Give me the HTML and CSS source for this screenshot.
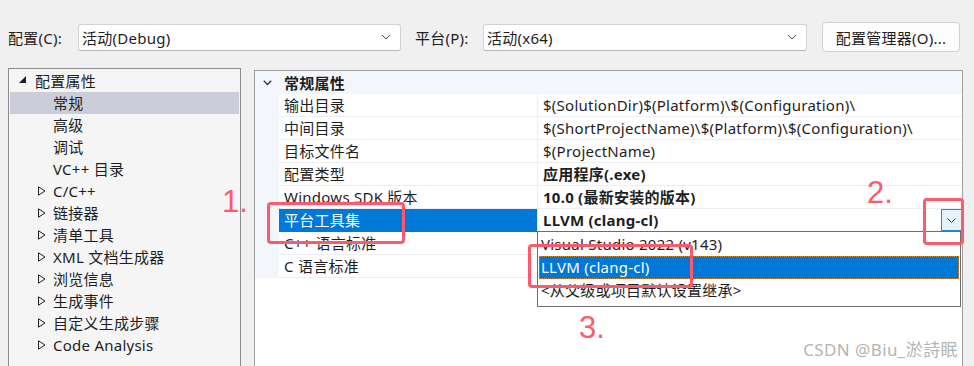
FILE: index.html
```html
<!DOCTYPE html>
<html lang="zh-CN">
<head>
    <meta charset="UTF-8">
    <title>属性页</title>
    <link rel="stylesheet" href="styles.css">
</head>
<body>
    <div class="toolbar">
        <span class="label">配置(C):</span>
        <div class="combo combo-config">
            <span>活动(Debug)</span>
            <svg class="chev" width="10" height="6" viewBox="0 0 10 6"><path d="M1 1l4 4 4-4" fill="none" stroke="#555" stroke-width="1"/></svg>
        </div>
        <span class="label label-platform">平台(P):</span>
        <div class="combo combo-platform">
            <span>活动(x64)</span>
            <svg class="chev" width="10" height="6" viewBox="0 0 10 6"><path d="M1 1l4 4 4-4" fill="none" stroke="#555" stroke-width="1"/></svg>
        </div>
        <button class="btn">配置管理器(O)...</button>
    </div>

    <div class="main">
        <div class="tree">
            <div class="node root">
                <svg class="tri" width="8" height="8" viewBox="0 0 8 8"><path d="M7 0v7H0z" fill="#1e1e1e"/></svg>
                配置属性
            </div>
            <div class="node leaf selected">常规</div>
            <div class="node leaf">高级</div>
            <div class="node leaf">调试</div>
            <div class="node leaf">VC++ 目录</div>
            <div class="node group"><svg class="tri-o" width="8" height="10" viewBox="0 0 8 10"><path d="M0.5 0.8v8.4L7 5z" fill="none" stroke="#1e1e1e"/></svg>C/C++</div>
            <div class="node group"><svg class="tri-o" width="8" height="10" viewBox="0 0 8 10"><path d="M0.5 0.8v8.4L7 5z" fill="none" stroke="#1e1e1e"/></svg>链接器</div>
            <div class="node group"><svg class="tri-o" width="8" height="10" viewBox="0 0 8 10"><path d="M0.5 0.8v8.4L7 5z" fill="none" stroke="#1e1e1e"/></svg>清单工具</div>
            <div class="node group"><svg class="tri-o" width="8" height="10" viewBox="0 0 8 10"><path d="M0.5 0.8v8.4L7 5z" fill="none" stroke="#1e1e1e"/></svg>XML 文档生成器</div>
            <div class="node group"><svg class="tri-o" width="8" height="10" viewBox="0 0 8 10"><path d="M0.5 0.8v8.4L7 5z" fill="none" stroke="#1e1e1e"/></svg>浏览信息</div>
            <div class="node group"><svg class="tri-o" width="8" height="10" viewBox="0 0 8 10"><path d="M0.5 0.8v8.4L7 5z" fill="none" stroke="#1e1e1e"/></svg>生成事件</div>
            <div class="node group"><svg class="tri-o" width="8" height="10" viewBox="0 0 8 10"><path d="M0.5 0.8v8.4L7 5z" fill="none" stroke="#1e1e1e"/></svg>自定义生成步骤</div>
            <div class="node group"><svg class="tri-o" width="8" height="10" viewBox="0 0 8 10"><path d="M0.5 0.8v8.4L7 5z" fill="none" stroke="#1e1e1e"/></svg>Code Analysis</div>
        </div>

        <div class="grid-panel">
            <div class="section">
                <svg class="sec-chev" width="9" height="6" viewBox="0 0 9 6"><path d="M0.8 0.8l3.7 3.7 3.7-3.7" fill="none" stroke="#333" stroke-width="1.3"/></svg>
                <span>常规属性</span>
            </div>
            <div class="rows">
                <div class="row"><div class="name">输出目录</div><div class="value">$(SolutionDir)$(Platform)\$(Configuration)\</div></div>
                <div class="row"><div class="name">中间目录</div><div class="value">$(ShortProjectName)\$(Platform)\$(Configuration)\</div></div>
                <div class="row"><div class="name">目标文件名</div><div class="value">$(ProjectName)</div></div>
                <div class="row"><div class="name">配置类型</div><div class="value bold">应用程序(.exe)</div></div>
                <div class="row"><div class="name">Windows SDK 版本</div><div class="value bold">10.0 (最新安装的版本)</div></div>
                <div class="row active">
                    <div class="name">平台工具集</div>
                    <div class="value bold">
                        <span>LLVM (clang-cl)</span>
                        <span class="drop-btn"><svg width="9" height="5" viewBox="0 0 9 5"><path d="M0.5 0.5l4 4 4-4" fill="none" stroke="#333" stroke-width="1"/></svg></span>
                    </div>
                    <div class="drop-list">
                        <div class="opt">Visual Studio 2022 (v143)</div>
                        <div class="opt chosen">LLVM (clang-cl)</div>
                        <div class="opt">&lt;从父级或项目默认设置继承&gt;</div>
                    </div>
                </div>
                <div class="row"><div class="name">C++ 语言标准</div><div class="value"></div></div>
                <div class="row"><div class="name">C 语言标准</div><div class="value"></div></div>
            </div>
        </div>
    </div>

    <!-- annotations drawn over the screenshot -->
    <div class="mark num num-1">1.</div>
    <div class="mark box box-1"></div>
    <div class="mark num num-2">2.</div>
    <div class="mark box box-2"></div>
    <div class="mark box box-3"></div>
    <div class="mark num num-3">3.</div>
    <div class="watermark">CSDN @Biu_淤詩眠</div>
</body>
</html>
```

FILE: styles.css
```css
body {
    margin: 0;
    height: 366px;
    overflow: hidden;
    background-color: #f0f0f0;
    font-family: "Noto Sans", "Noto Sans CJK SC", sans-serif;
    font-size: 15px;
    letter-spacing: 0.25px;
    color: #1e1e1e;
    position: relative;
}
.toolbar {
    display: flex;
    align-items: center;
    height: 30px;
    padding: 22px 0 0 8px;
}
.label {
    width: 70px;
}
.label-platform {
    width: 68px;
    margin-left: 14px;
}
.combo {
    box-sizing: border-box;
    height: 27px;
    background: #fff;
    border: 1px solid #d2d2d2;
    border-bottom-color: #b8b8b8;
    border-radius: 3px;
    display: flex;
    align-items: center;
    justify-content: space-between;
    padding: 0 9px 0 3px;
}
.combo-config { width: 323px; }
.combo-platform { width: 324px; }
.btn {
    box-sizing: border-box;
    margin-left: 15px;
    width: 138px;
    height: 30px;
    background: #fdfdfd;
    border: 1px solid #d0d0d0;
    border-radius: 4px;
    font: inherit;
    letter-spacing: inherit;
    color: #1e1e1e;
    padding: 0;
}
.main {
    display: flex;
    align-items: flex-start;
    margin-top: 16px;
    padding-left: 8px;
}
.tree {
    box-sizing: border-box;
    width: 233px;
    height: 298px;
    background: #f5f5f5;
    border: 1px solid #8c8c8c;
    border-bottom: none;
    padding: 1px 1px 0 1px;
}
.node {
    height: 22px;
    line-height: 22px;
    display: flex;
    align-items: center;
    white-space: nowrap;
}
.root { padding-left: 9px; }
.tri { margin-right: 8px; margin-top: -2px; }
.leaf { padding-left: 43px; }
.group { padding-left: 28px; }
.tri-o { margin-right: 7px; }
.selected { background: #cbcdda; }
.grid-panel {
    box-sizing: border-box;
    width: 709px;
    height: 296px;
    margin-left: 13px;
    margin-top: 2px;
    background: #fff;
    border: 1px solid #a0a0a0;
    border-bottom: none;
    position: relative;
}
.section {
    height: 23px;
    background: #f3f6fb;
    display: flex;
    align-items: center;
    font-weight: bold;
}
.sec-chev { margin: 0 12px 0 8px; }
.rows {
    border-left: 24px solid #f3f6fb;
}
.row {
    display: flex;
    height: 23px;
    position: relative;
}
.name {
    box-sizing: border-box;
    width: 259px;
    padding-left: 5px;
    line-height: 22px;
    border-right: 1px solid #eceef3;
    border-bottom: 1px solid #eceef3;
    white-space: nowrap;
}
.value {
    flex: 1;
    padding-left: 5px;
    line-height: 22px;
    border-bottom: 1px solid #eceef3;
    white-space: nowrap;
    display: flex;
    justify-content: space-between;
}
.bold { font-weight: bold; }
.active .name {
    background: #0078d7;
    color: #fff;
    border-bottom-color: #0078d7;
}
.drop-btn {
    box-sizing: border-box;
    width: 21px;
    height: 22px;
    background: #e5f1fb;
    border: 1px solid #2c84d6;
    display: flex;
    align-items: center;
    justify-content: center;
}
.drop-list {
    position: absolute;
    left: 258px;
    top: 22px;
    box-sizing: border-box;
    width: 424px;
    height: 76px;
    background: #fff;
    border: 1px solid #6e6e6e;
    padding: 1px 1px 0 1px;
    z-index: 2;
}
.opt {
    height: 23px;
    line-height: 22px;
    padding-left: 2px;
    white-space: nowrap;
}
.chosen {
    background: #0078d7;
    color: #fff;
    outline: 1px dotted #c98a3a;
    outline-offset: -1px;
}
.mark {
    position: absolute;
    z-index: 5;
}
.num {
    color: #fd5a6c;
    font-family: "Liberation Sans", sans-serif;
    font-size: 31px;
    line-height: 30px;
    letter-spacing: 0;
}
.num-1 { left: 222px; top: 187px; }
.num-2 { left: 867px; top: 178px; }
.num-3 { left: 579px; top: 313px; }
.box {
    box-sizing: border-box;
    border: 3px solid #fd5a6c;
    border-radius: 4px;
}
.box-1 { left: 267px; top: 202px; width: 138px; height: 42px; }
.box-2 { left: 923px; top: 198px; width: 41px; height: 47px; }
.box-3 { left: 528px; top: 244px; width: 165px; height: 44px; }
.watermark {
    position: absolute;
    right: 16px;
    top: 336px;
    color: #b4b4b4;
    font-size: 17px;
    letter-spacing: 0.4px;
    z-index: 5;
}
```
